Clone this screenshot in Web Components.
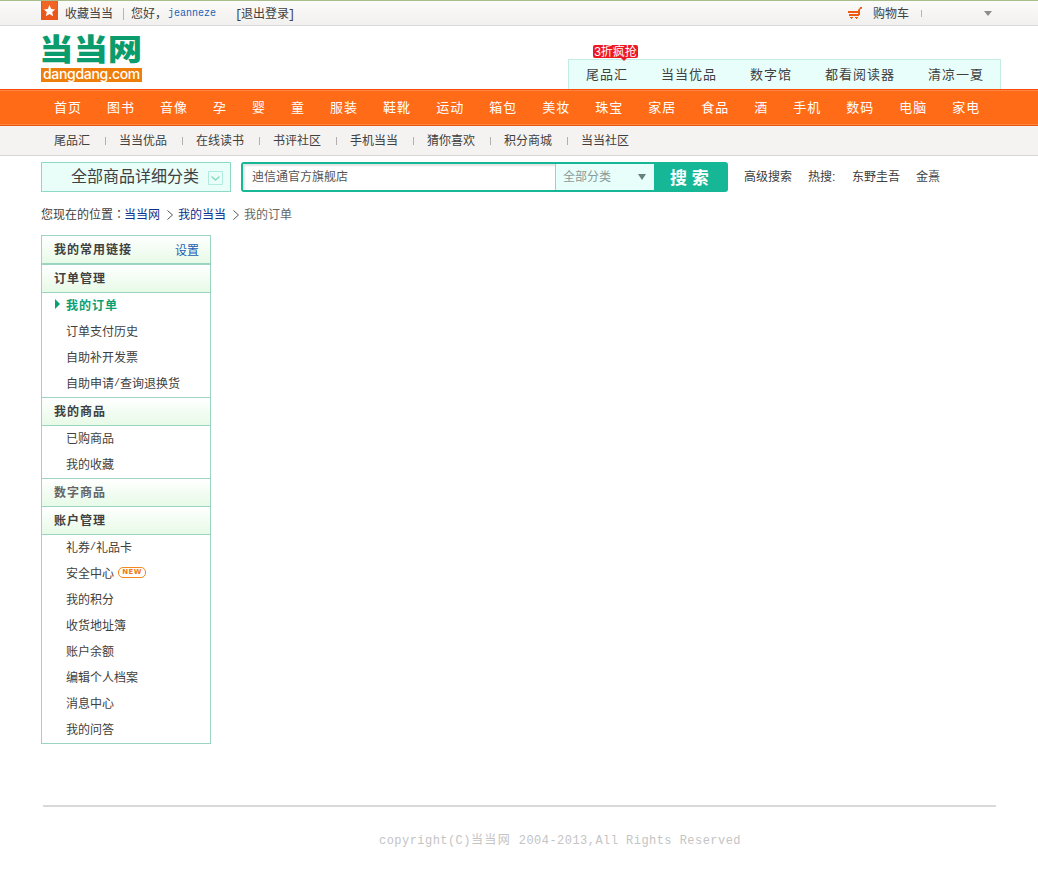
<!DOCTYPE html>
<html lang="zh-CN">
<head>
<meta charset="utf-8">
<title>我的订单 - 当当网</title>
<style>
html,body{margin:0;padding:0;background:#fff}
body{font:12px/16px "Liberation Sans","Noto Sans CJK SC",sans-serif;color:#404040;width:1038px;height:870px;overflow:hidden}
</style>
</head>
<body>
<dd-page></dd-page>
<script>
function define(name, html, setup) {
  const t = document.createElement('template');
  t.innerHTML = '<style>*{box-sizing:border-box}:host{display:block;box-sizing:border-box}[hidden]{display:none}.half{font:10px/12px "Liberation Mono",monospace}</style>' + html;
  customElements.define(name, class extends HTMLElement {
    constructor() {
      super();
      this.attachShadow({mode: 'open'}).append(t.content.cloneNode(true));
    }
    connectedCallback() { if (setup) setup(this, this.shadowRoot); }
  });
}
const fill = (root, sel, words, tag) => {
  root.querySelector(sel).innerHTML = words.split(' ').map(w => `<${tag}>${w}</${tag}>`).join('');
};

define('dd-topbar', `<style>
:host{height:26px;border-top:1px solid #a9bd8c;border-bottom:1px solid #d9d9d9;background:linear-gradient(#fbfbfa,#f1f0ee)}
.row{display:flex;height:24px;padding:1px 0 0 41px;align-items:center;white-space:pre}
.fav{width:17px;height:19px;align-self:flex-start;margin-top:-1px}
.a{margin-left:7px}
.bar{width:1px;height:12px;background:#b5b5b5;margin:0 8px 0 10px}
.hi{width:36px;margin-left:-1px}
.user{font:10px/16px "Liberation Mono",monospace;color:#1a5fb4;margin:1px 0 0 1px}
.out{margin-left:20px;width:60px}
.out .half{font-size:12px;display:inline-block;width:5px;text-indent:-1px}
.cart{margin-left:552px;width:14px;height:13px}
.c{margin-left:11px;width:36px}
.s{width:1px;height:7px;background:#b5b5b5;margin-left:12px}
.d{margin-left:62px;border:4px solid transparent;border-top:5px solid #8c8c8c;border-bottom:0}
</style><div class="row">
<svg class="fav" viewBox="0 0 17 19"><path fill="#e9581a" d="M0 0h17v19H0z"/><path fill="#f97a3a" d="M1 0h15v9H1z" opacity=".4"/><path fill="#fff" d="M8.500 4l1.700 4 4 .4-3 2.700.9 4.100-3.600-2.100-3.600 2.100.9-4.100-3-2.700 4-.4z"/></svg><span class="a">收藏当当</span><i class="bar"></i><span class="hi">您好，</span><span class="user">jeanneze</span><span class="out"><span class="half">[</span>退出登录<span class="half">]</span></span>
<svg class="cart" viewBox="0 0 14 13"><g fill="#ee5a10"><path d="M0 4h12v2H0zM1 7h10v2H1z"/><path d="M10 8V3.500Q10 2 11.500 1.500L12 0H14v1.500L12 2.500V8z"/><path d="M2 10h3v1H4v1H3v-1H2zM7 10h3v1H9v1H8v-1H7z"/></g></svg><span class="c">购物车</span><i class="s"></i><i class="d"></i></div>`);

define('dd-logo', `<style>
:host{width:102px;height:50px}
.cn{font:900 31px/28px "Noto Sans CJK SC",sans-serif;color:#0a9c6c;height:29px;width:94px;white-space:nowrap;transform:scale(1.11,.96);transform-origin:0 0;margin:-1px 0 0 -2px}
.en{background:#ef7d0a;color:#fff;height:14px;width:101px;margin-top:5px;text-align:center;font:500 14px/12px Inter,sans-serif;letter-spacing:-.3px;white-space:nowrap}
</style><div class="cn">当当网</div><div class="en">dangdang.com</div>`);

define('dd-promo', `<style>
:host{width:433px;height:31px;border:1px solid #c3ece2;border-bottom:0;background:#e8fefa;position:relative}
.items{display:flex;gap:33px;padding:6px 0 0 17px;font-size:13px;line-height:18px;letter-spacing:1px;white-space:nowrap}
.tip{position:absolute;left:24px;top:-15px;width:45px;height:13px;border-radius:2px;background:#ee1822;color:#fff;font-size:12px;line-height:14px;text-align:center;white-space:nowrap}
.tip::after{content:"";position:absolute;left:28px;top:13px;border:3px solid transparent;border-top-color:#ee1822;border-bottom:0}
</style><div class="items"></div><span class="tip">3折疯抢</span>`,
(h, r) => fill(r, '.items', '尾品汇 当当优品 数字馆 都看阅读器 清凉一夏', 'span'));

define('dd-header', `<style>
:host{height:63px;display:flex;padding-left:41px}
dd-logo{margin-top:9px}
dd-promo{margin:33px 0 0 425px;height:30px}
</style><dd-logo></dd-logo><dd-promo></dd-promo>`);

define('dd-nav', `<style>
:host{height:37px;background:#ff6b16;border-top:1px solid #f74c0c;border-bottom:1px solid #e5560f;box-shadow:inset 0 1px #ff8540,inset 0 -1px #ff8540}
div{display:flex;gap:25px;padding:9px 0 0 54px;color:#fff;font-size:13px;line-height:18px;letter-spacing:1px;white-space:nowrap}
</style><div></div>`,
(h, r) => fill(r, 'div', '首页 图书 音像 孕 婴 童 服装 鞋靴 运动 箱包 美妆 珠宝 家居 食品 酒 手机 数码 电脑 家电', 'span'));

define('dd-subnav', `<style>
:host{height:30px;background:#f5f3f2;border-bottom:1px solid #d8d5d5}
div{display:flex;padding:7px 0 0 54px;white-space:nowrap}
span+span{margin-left:14px;padding-left:15px;background:linear-gradient(#b5b0b0,#b5b0b0) 1px 4px/1px 8px no-repeat}
</style><div></div>`,
(h, r) => fill(r, 'div', '尾品汇 当当优品 在线读书 书评社区 手机当当 猜你喜欢 积分商城 当当社区', 'span'));

define('dd-search', `<style>
:host{height:44px;display:flex;padding:6px 0 0 41px;white-space:nowrap}
.all{width:190px;height:30px;border:1px solid #8cd9c6;background:#e9fdf9;display:flex;align-items:center;padding-left:29px;font-size:16px;line-height:26px}
.all svg{width:15px;height:14px;margin:2px 0 0 9px}
.box{margin-left:10px;width:487px;height:30px;display:flex;border-radius:3px;background:#15b796;padding:2px 0 2px 2px}
.in{width:312px;background:#fff;box-shadow:inset 2px 2px 2px #e4e4e4;padding-left:9px;line-height:27px;color:#555}
.cat{width:99px;background:#e8fefa;border-left:1px solid #8cd9c6;color:#8a9a96;line-height:27px;padding-left:7px;display:flex;align-items:center}
.cat i{border:4px solid transparent;border-top:6px solid #68807a;border-bottom:0;margin-left:27px}
.go{flex:1;color:#fff;font:bold 17px/26px "Noto Sans CJK SC",sans-serif;padding-left:16px;word-spacing:1px}
.hot{display:flex;padding:7px 0 0 16px}
.hot span:nth-child(2){margin-left:16px;width:28px}
.hot span:nth-child(3){margin:0 16px}
</style><div class="all">全部商品详细分类<svg viewBox="0 0 15 14" fill="none"><path stroke="#b3eadf" d="M.5.500h14v13H.5z"/><path stroke="#8cd9c6" stroke-width="1.500" d="M3.500 5.500l4 3.500 4-3.500"/></svg></div>
<div class="box"><div class="in">迪信通官方旗舰店</div><div class="cat">全部分类<i></i></div><div class="go">搜 索</div></div>
<div class="hot"><span>高级搜索</span><span>热搜:</span><span>东野圭吾</span><span>金熹</span></div>`);

define('dd-crumbs', `<style>
:host{height:35px;padding:7px 0 0 41px;display:flex;align-items:flex-start;white-space:nowrap}
a{color:#0b308e}
span{width:83px;height:16px;margin-top:-1px}
em{font:12px/16px "Noto Sans CJK TC",sans-serif}
svg{width:6px;height:10px;margin:3px 5px 0 7px}
b{font-weight:400;color:#666}
</style><span>您现在的位置<em lang="zh-TW">：</em></span><a>当当网</a><svg viewBox="0 0 6 10" fill="none" stroke="#555"><path d="M.5.500L5.500 5l-5 4.500"/></svg><a>我的当当</a><svg viewBox="0 0 6 10" fill="none" stroke="#555"><path d="M.5.500L5.500 5l-5 4.500"/></svg><b>我的订单</b>`);

define('dd-head', `<style>
:host{height:28px;border-top:1px solid #9bd5c2;background:linear-gradient(#fff,#e7fae7);padding:6px 11px 0 12px;display:flex;justify-content:space-between;font-weight:700;font-size:12px;letter-spacing:1px;line-height:16px}
::slotted(a){font-weight:400;color:#1a5fb4;letter-spacing:0;margin-top:1px}
</style><slot></slot><slot name="action"></slot>`);

define('dd-link', `<style>
:host{height:26px;padding:5px 0 0 24px;display:flex;white-space:nowrap}
:host([active]){color:#07a074;font-weight:700;letter-spacing:1px}
i{display:none;width:0;border:5px solid transparent;border-left-color:#07a074;border-right:0;margin:1px 6px 0 -11px;height:0}
:host([active]) i{display:block}
</style><i></i><slot></slot><slot name="badge"></slot>`);

define('dd-new', `<style>
:host{width:28px;height:11px;margin:1px 0 0 4px;border:1px solid #f28a20;border-radius:5px;color:#f07c10;font:bold 7px/9px "DejaVu Sans",sans-serif;text-align:center;letter-spacing:.4px}
</style>NEW`);

define('dd-sidebar', `<style>
:host{width:170px;margin-left:41px;border:1px solid #9bd5c2;border-top:0}
.g{border-top:1px solid #9bd5c2;}
</style>
<dd-head>我的常用链接<a slot="action">设置</a></dd-head>
<div class="g"><dd-head>订单管理</dd-head></div>
<div class="g"><dd-link active>我的订单</dd-link><dd-link>订单支付历史</dd-link><dd-link>自助补开发票</dd-link><dd-link>自助申请<span class="half" style="line-height:16px">/</span>查询退换货</dd-link></div>
<dd-head>我的商品</dd-head>
<div class="g"><dd-link>已购商品</dd-link><dd-link>我的收藏</dd-link></div>
<dd-head style="color:#666">数字商品</dd-head>
<dd-head>账户管理</dd-head>
<div class="g"><dd-link>礼券<span class="half" style="line-height:16px">/</span>礼品卡</dd-link><dd-link>安全中心<dd-new slot="badge"></dd-new></dd-link><dd-link>我的积分</dd-link><dd-link>收货地址簿</dd-link><dd-link>账户余额</dd-link><dd-link>编辑个人档案</dd-link><dd-link>消息中心</dd-link><dd-link>我的问答</dd-link></div>`);

define('dd-footer', `<style>
:host{margin:61px 0 0 43px;width:953px;border-top:2px solid #d9d9d9;padding:25px 0 0 336px;color:#c4c4c4;font:12px/18px "Liberation Mono","Noto Sans CJK SC",monospace;letter-spacing:.46px;white-space:nowrap}
</style>copyright(C)<span style="letter-spacing:1.400px">当当网</span> 2004-2013,All Rights Reserved`);

define('dd-page', `<dd-topbar></dd-topbar><dd-header></dd-header><dd-nav></dd-nav><dd-subnav></dd-subnav><dd-search></dd-search><dd-crumbs></dd-crumbs><dd-sidebar></dd-sidebar><dd-footer></dd-footer>`);
</script>
</body>
</html>
